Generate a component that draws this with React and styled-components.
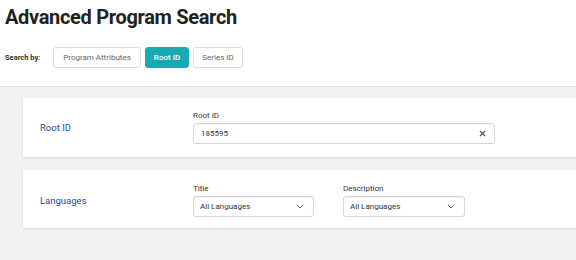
import React from "react";
import styled, { createGlobalStyle } from "styled-components";

const Global = createGlobalStyle`
  html, body { margin: 0; padding: 0; background: #ffffff; }
  body { font-family: Roboto, "Liberation Sans", Arial, sans-serif; color: #222; }
  * { box-sizing: border-box; }
`;

const Page = styled.div`
  width: 576px;
  height: 260px;
  display: flex;
  flex-direction: column;
  overflow: hidden;
`;

const Header = styled.header`
  padding: 5px 0 0 5px;
  height: 86px;
  flex: none;
`;

const Title = styled.h1`
  margin: 0;
  font-size: 20px;
  line-height: 25px;
  font-weight: 700;
  color: #222;
  letter-spacing: -0.32px;
`;

const SearchRow = styled.div`
  display: flex;
  align-items: center;
  gap: 4px;
  margin-top: 17px;
`;

const SearchLabel = styled.span`
  font-size: 7.5px;
  font-weight: 700;
  color: #333;
  width: 44px;
`;

const ToggleButton = styled.button`
  width: ${(p) => p.$w}px;
  height: 21px;
  padding: 0;
  border-radius: 3px;
  border: 1px solid ${(p) => (p.$active ? "#17aab3" : "#dedede")};
  background: ${(p) => (p.$active ? "#17aab3" : "#fff")};
  color: ${(p) => (p.$active ? "#fff" : "#666")};
  font-family: inherit;
  font-size: 8px;
  font-weight: ${(p) => (p.$active ? 500 : 400)};
  cursor: pointer;
`;

const Content = styled.main`
  flex: 1;
  background: #f2f2f2;
  border-top: 1px solid #e6e6e6;
  padding: 11px 0 0 23px;
  display: flex;
  flex-direction: column;
  gap: 13px;
`;

const Card = styled.section`
  background: #fff;
  box-shadow: 0 1px 2px rgba(0, 0, 0, 0.12);
  display: grid;
  grid-template-columns: 170px 1fr;
  align-items: center;
  padding: ${(p) => p.$pt}px 0 ${(p) => p.$pb}px 0;
  margin-right: -10px;
`;

const CardLabel = styled.div`
  padding-left: 17px;
  font-size: 9.5px;
  color: #2c4a86;
`;

const Fields = styled.div`
  display: flex;
  gap: 29px;
`;

const Field = styled.div`
  display: flex;
  flex-direction: column;
  gap: 3px;
`;

const FieldLabel = styled.label`
  font-size: 8px;
  line-height: 9px;
  color: #333;
`;

const InputBox = styled.div`
  width: ${(p) => p.$w}px;
  height: 21px;
  border: 1px solid #d6d6d6;
  border-radius: 3px;
  box-shadow: inset 0 1px 1px rgba(0, 0, 0, 0.06);
  background: #fff;
  display: flex;
  align-items: center;
  justify-content: space-between;
  padding: 0 ${(p) => p.$pr}px 0 ${(p) => p.$pl}px;
  font-size: 8px;
  color: #333;
`;

const Icon = styled.svg`
  flex: none;
  display: block;
`;

const ClearIcon = () => (
  <Icon width="7" height="7" viewBox="0 0 7 7">
    <path d="M1 1 L6 6 M6 1 L1 6" stroke="#555" strokeWidth="1.2" />
  </Icon>
);

const Chevron = () => (
  <Icon width="8" height="5" viewBox="0 0 8 5">
    <path d="M0.8 0.8 L4 4 L7.2 0.8" stroke="#777" strokeWidth="1" fill="none" />
  </Icon>
);

export default function App() {
  return (
    <Page>
      <Global />
      <Header>
        <Title>Advanced Program Search</Title>
        <SearchRow>
          <SearchLabel>Search by:</SearchLabel>
          <ToggleButton $w={88}>Program Attributes</ToggleButton>
          <ToggleButton $w={44} $active>Root ID</ToggleButton>
          <ToggleButton $w={50}>Series ID</ToggleButton>
        </SearchRow>
      </Header>
      <Content>
        <Card $pt={13} $pb={13}>
          <CardLabel>Root ID</CardLabel>
          <Fields>
            <Field>
              <FieldLabel>Root ID</FieldLabel>
              <InputBox $w={302} $pl={7} $pr={8}>
                <span>185595</span>
                <ClearIcon />
              </InputBox>
            </Field>
          </Fields>
        </Card>
        <Card $pt={14} $pb={11}>
          <CardLabel>Languages</CardLabel>
          <Fields>
            <Field>
              <FieldLabel>Title</FieldLabel>
              <InputBox $w={121} $pl={6} $pr={9}>
                <span>All Languages</span>
                <Chevron />
              </InputBox>
            </Field>
            <Field>
              <FieldLabel>Description</FieldLabel>
              <InputBox $w={122} $pl={6} $pr={9}>
                <span>All Languages</span>
                <Chevron />
              </InputBox>
            </Field>
          </Fields>
        </Card>
      </Content>
    </Page>
  );
}
